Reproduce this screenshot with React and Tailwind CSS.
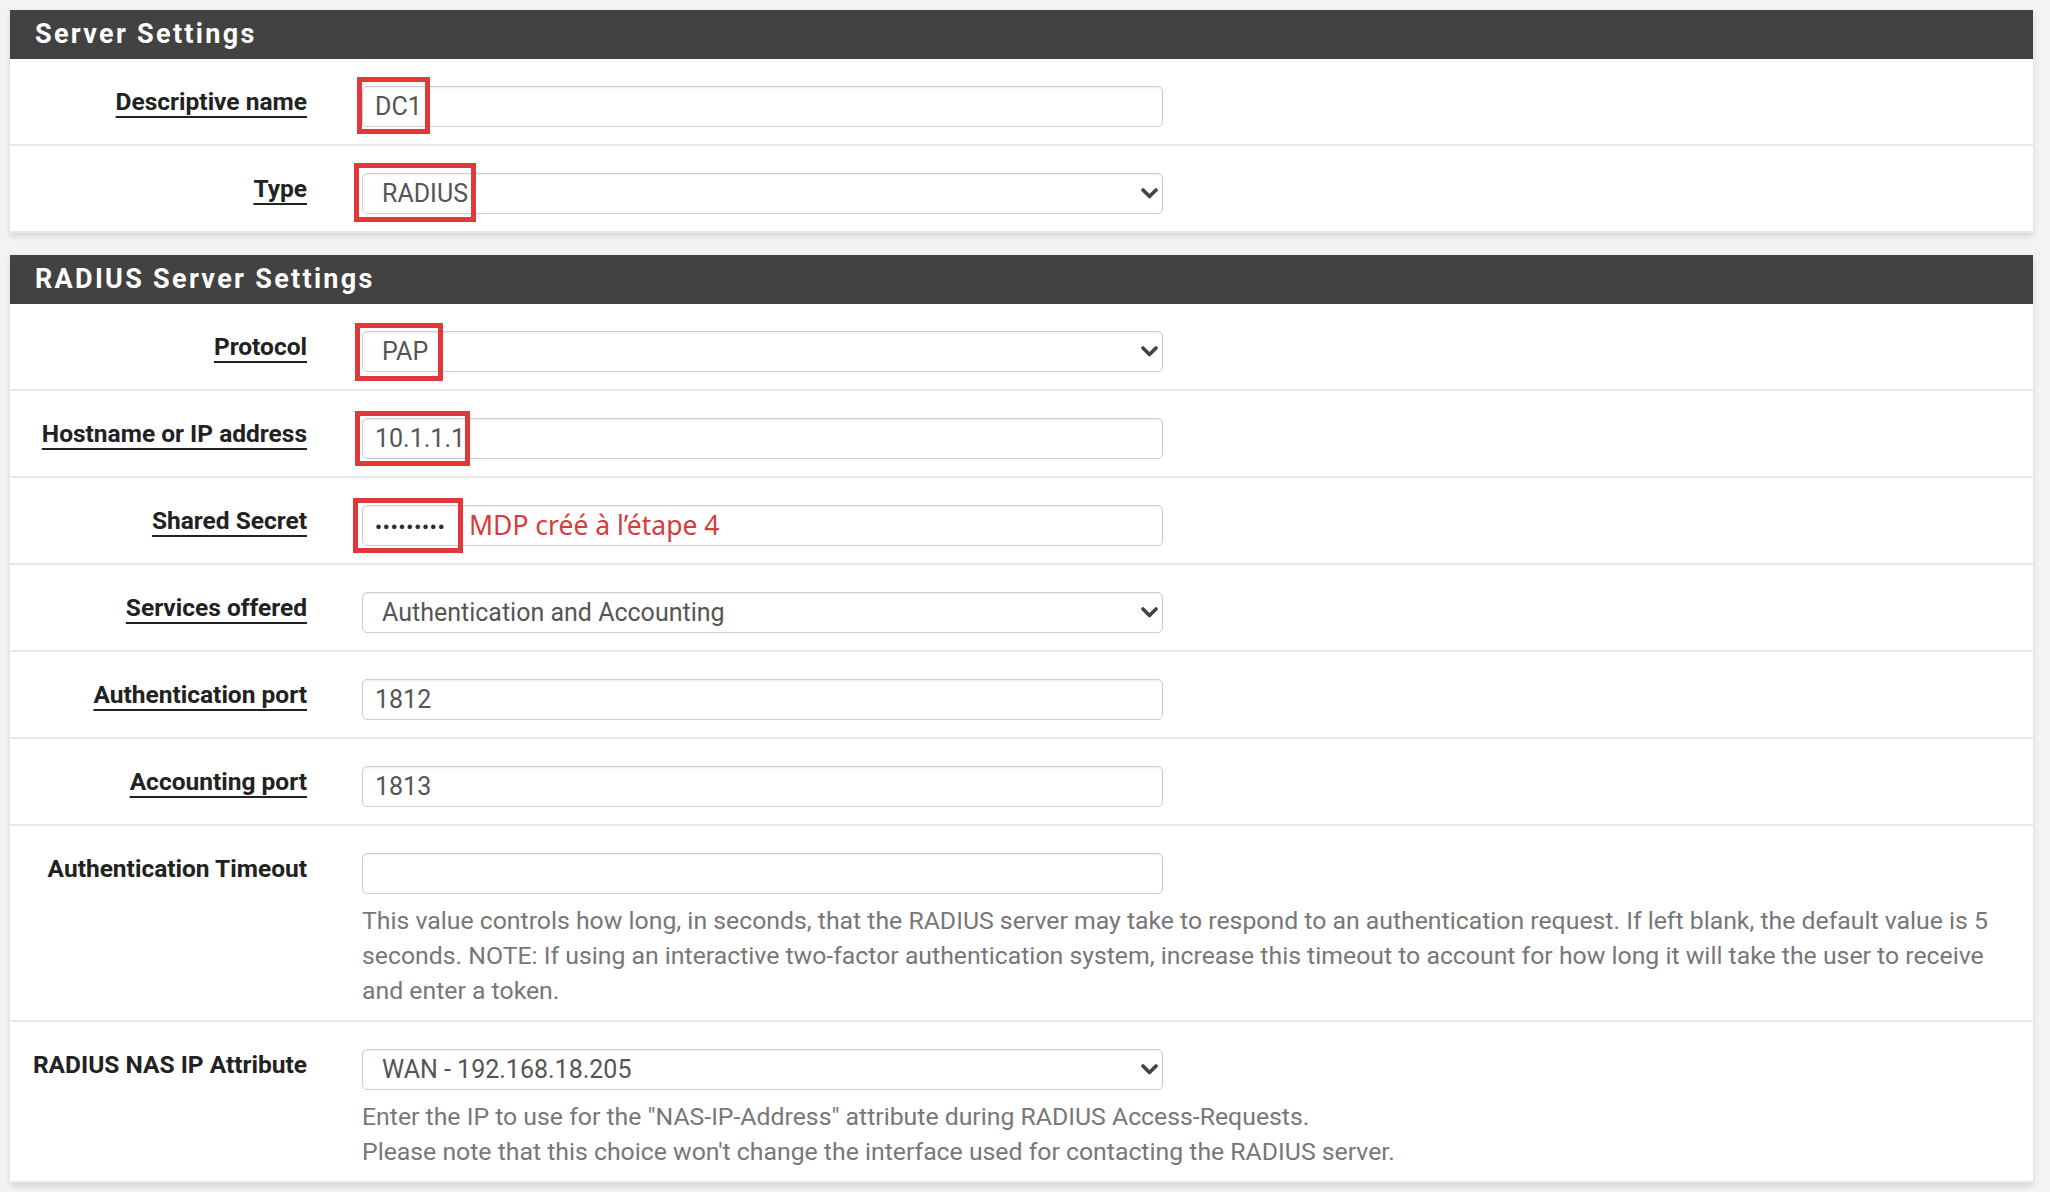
import React from 'react';

function Chevron() {
  return (
    <svg width="17" height="11" viewBox="0 0 17 11" className="shrink-0">
      <polyline points="2,2 8.5,8.5 15,2" fill="none" stroke="#444" strokeWidth="3.6" strokeLinecap="round" strokeLinejoin="round" />
    </svg>
  );
}

function Mark({ left, top, w, h }) {
  // red annotation frame over the field
  return (
    <div
      className="absolute border-[5px] border-[#e0393b] pointer-events-none"
      style={{ left, top, width: w, height: h }}
    />
  );
}

function Field({ value, select, mark, children }) {
  return (
    <div className="relative w-[801px]">
      <div
        className={
          'h-[41px] rounded-[5px] border border-[#cdcdcd] bg-white shadow-[inset_0_1px_2px_rgba(0,0,0,0.08)] flex items-center justify-between text-[25px] text-[#555] ' +
          (select ? 'pl-[19px] pr-[4px]' : 'pl-[12px]')
        }
      >
        <span className="leading-none">{value}</span>
        {select && <Chevron />}
      </div>
      {mark && <Mark {...mark} />}
      {children}
    </div>
  );
}

function Row({ label, link = true, help = false, children }) {
  return (
    <div className="flex border-b-2 border-[#e8e8e8]">
      <div className="w-[297px] shrink-0 text-right pt-[29px]">
        <span
          className={
            'text-[24.5px] leading-[28px] font-bold text-[#222] ' +
            (link ? 'underline decoration-2 underline-offset-[6px]' : '')
          }
        >
          {label}
        </span>
      </div>
      <div className={'flex-1 pl-[55px] pr-[22px] pt-[27px] ' + (help ? 'pb-[12px]' : 'pb-[17px]')}>{children}</div>
    </div>
  );
}

function Panel({ title, children, className = '' }) {
  return (
    <div className={'bg-white shadow-[0_3px_6px_rgba(0,0,0,0.13)] ' + className}>
      <div className="h-[49px] bg-[#424242] flex items-center px-[25px]">
        <h2 className="text-white font-bold text-[27px] tracking-[2.3px]">{title}</h2>
      </div>
      {children}
    </div>
  );
}

function Help({ children }) {
  return <p className="mt-[9px] text-[24.8px] leading-[35px] text-[#777]">{children}</p>;
}

export default function App() {
  return (
    <div className="min-h-screen bg-[#f3f3f3] pl-[10px] pr-[17px] pt-[10px] pb-[12px] font-['Roboto',sans-serif]">
      <Panel title="Server Settings">
        <Row label="Descriptive name">
          <Field value="DC1" mark={{ left: -5, top: -9, w: 73, h: 57 }} />
        </Row>
        <Row label="Type">
          <Field value="RADIUS" select mark={{ left: -8, top: -10, w: 122, h: 59 }} />
        </Row>
      </Panel>

      <Panel title="RADIUS Server Settings" className="mt-[22px]">
        <Row label="Protocol">
          <Field value="PAP" select mark={{ left: -7, top: -8, w: 88, h: 58 }} />
        </Row>
        <Row label="Hostname or IP address">
          <Field value="10.1.1.1" mark={{ left: -7, top: -7, w: 115, h: 55 }} />
        </Row>
        <Row label="Shared Secret">
          <Field
            value={<span className="text-[19px] font-bold tracking-[1px] text-[#2a2a3a]">•••••••••</span>}
            mark={{ left: -9, top: -7, w: 110, h: 55 }}
          >
            <span className="absolute left-[107px] top-0 h-[41px] flex items-center text-[26.5px] text-[#d83a3c] font-['Noto_Sans',sans-serif]">
              MDP créé à l’étape 4
            </span>
          </Field>
        </Row>
        <Row label="Services offered">
          <Field value="Authentication and Accounting" select />
        </Row>
        <Row label="Authentication port">
          <Field value="1812" />
        </Row>
        <Row label="Accounting port">
          <Field value="1813" />
        </Row>
        <Row label="Authentication Timeout" link={false} help>
          <Field value="" />
          <Help>
            This value controls how long, in seconds, that the RADIUS server may take to respond to an authentication request. If left blank, the default value is 5 seconds. NOTE: If using an interactive two-factor authentication system, increase this timeout to account for how long it will take the user to receive and enter a token.
          </Help>
        </Row>
        <Row label="RADIUS NAS IP Attribute" link={false} help>
          <Field value="WAN - 192.168.18.205" select />
          <Help>
            Enter the IP to use for the "NAS-IP-Address" attribute during RADIUS Access-Requests.
            <br />
            Please note that this choice won't change the interface used for contacting the RADIUS server.
          </Help>
        </Row>
      </Panel>
    </div>
  );
}
